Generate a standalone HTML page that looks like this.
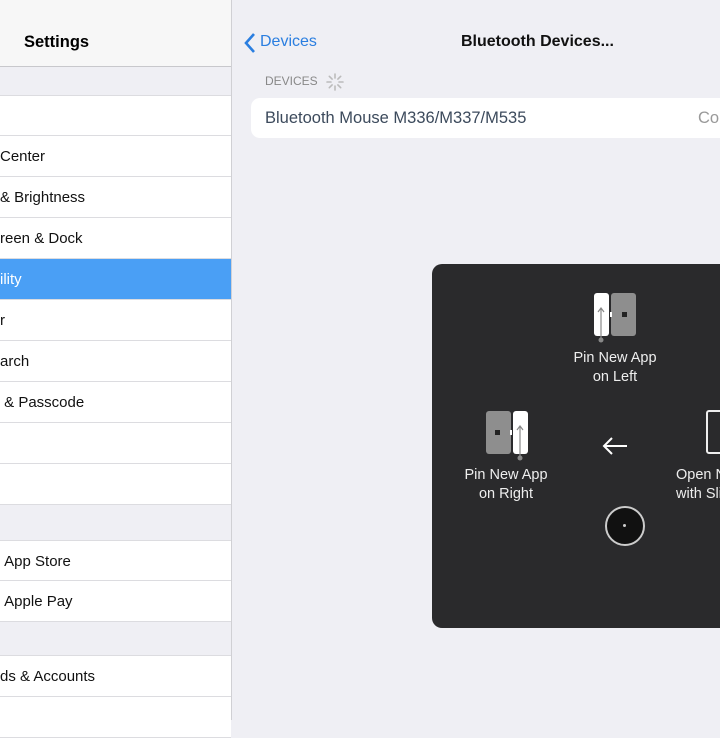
<!DOCTYPE html>
<html><head><style>
body{margin:0;width:720px;height:720px;overflow:hidden;background:#efeff4;font-family:"Liberation Sans",sans-serif;position:relative}
.l{position:absolute;left:0;top:0;width:231px;height:720px;background:#efeff4;border-right:1px solid #d0d0d4}
.hdr{position:absolute;left:0;top:0;width:231px;height:66px;background:#f7f7f7;border-bottom:1px solid #c8c8cc}
.row{position:absolute;left:0;width:231px;height:40px;background:#fff;border-bottom:1px solid #dcdce0;font-size:15px;color:#111;line-height:42px;white-space:nowrap}
.sel{background:#4a9ff5;color:#fff}
.t{position:absolute;font-size:16px;white-space:nowrap}
.wt{color:#eee;font-size:14.5px;text-align:center;position:absolute;line-height:19px;white-space:nowrap}
</style></head><body>
<div class="l">
<div class="hdr"><div class="t" style="left:24px;top:33px;font-weight:bold;font-size:16.5px">Settings</div></div>
<div class="row" style="top:95px;height:39px;border-top:1px solid #dcdce0"></div>
<div class="row" style="top:136px">Center</div>
<div class="row" style="top:177px">&amp; Brightness</div>
<div class="row" style="top:218px">reen &amp; Dock</div>
<div class="row sel" style="top:259px">ility</div>
<div class="row" style="top:300px">r</div>
<div class="row" style="top:341px">arch</div>
<div class="row" style="top:382px">&nbsp;&amp; Passcode</div>
<div class="row" style="top:423px"></div>
<div class="row" style="top:464px"></div>
<div class="row" style="top:540px;height:39px;border-top:1px solid #dcdce0">&nbsp;App Store</div>
<div class="row" style="top:581px">&nbsp;Apple Pay</div>
<div class="row" style="top:655px;border-top:1px solid #dcdce0">ds &amp; Accounts</div>
<div class="row" style="top:697px"></div>
</div>
<svg style="position:absolute;left:243px;top:32px" width="14" height="22"><path d="M11 2 L3 11 L11 20" stroke="#2a7ee0" stroke-width="2.6" fill="none"/></svg>
<div class="t" style="left:260px;top:33px;color:#2a7ee0">Devices</div>
<div class="t" style="left:461px;top:33px;font-weight:bold;color:#111">Bluetooth Devices...</div>
<div class="t" style="left:265px;top:74px;font-size:12px;color:#888">DEVICES</div>
<svg style="position:absolute;left:325px;top:72px" width="20" height="20"><g stroke="#bbb" stroke-width="1.6" stroke-linecap="round"><path d="M10 2v4M10 14v4M2 10h4M14 10h4M4.3 4.3l2.8 2.8M12.9 12.9l2.8 2.8M4.3 15.7l2.8-2.8M12.9 7.1l2.8-2.8"/></g></svg>
<div style="position:absolute;left:251px;top:98px;width:480px;height:40px;background:#fff;border-radius:9px"></div>
<div class="t" style="left:265px;top:109px;color:#3c4a5c;font-size:16.5px">Bluetooth Mouse M336/M337/M535</div>
<div class="t" style="left:698px;top:109px;color:#999;font-size:16.5px">Con</div>
<div style="position:absolute;left:432px;top:264px;width:300px;height:364px;background:#2a2a2c;border-radius:10px"></div>
<svg style="position:absolute;left:590px;top:290px" width="50" height="55"><rect x="4" y="3" width="15" height="43" rx="3" fill="#fff"/><rect x="21" y="3" width="25" height="43" rx="3" fill="#8e8e8e"/><rect x="20" y="22" width="2" height="5" fill="#fff"/><rect x="32" y="22" width="5" height="5" fill="#222"/><path d="M11 50V18M8 22l3-4 3 4" stroke="#888" stroke-width="1.2" fill="none"/><circle cx="11" cy="50" r="2.5" fill="#888"/></svg>
<div class="wt" style="left:565px;top:349px;width:100px">Pin New App<br>on Left</div>
<svg style="position:absolute;left:482px;top:408px" width="50" height="55"><rect x="4" y="3" width="25" height="43" rx="3" fill="#8e8e8e"/><rect x="31" y="3" width="15" height="43" rx="3" fill="#fff"/><rect x="28" y="22" width="2" height="5" fill="#fff"/><rect x="13" y="22" width="5" height="5" fill="#222"/><path d="M38 50V18M35 22l3-4 3 4" stroke="#888" stroke-width="1.2" fill="none"/><circle cx="38" cy="50" r="2.5" fill="#888"/></svg>
<div class="wt" style="left:456px;top:466px;width:100px">Pin New App<br>on Right</div>
<svg style="position:absolute;left:600px;top:435px" width="30" height="22"><path d="M27 11H4M12 3L4 11l8 8" stroke="#fff" stroke-width="2" fill="none"/></svg>
<div style="position:absolute;left:706px;top:410px;width:20px;height:40px;border:2px solid #eee;border-radius:3px"></div>
<div class="wt" style="left:676px;top:466px;text-align:left">Open New<br>with Slide</div>
<div style="position:absolute;left:605px;top:506px;width:36px;height:36px;border:2px solid #ccc;border-radius:50%;background:#111"></div>
<div style="position:absolute;left:623px;top:524px;width:3px;height:3px;background:#ccc;border-radius:50%"></div>
</body></html>
